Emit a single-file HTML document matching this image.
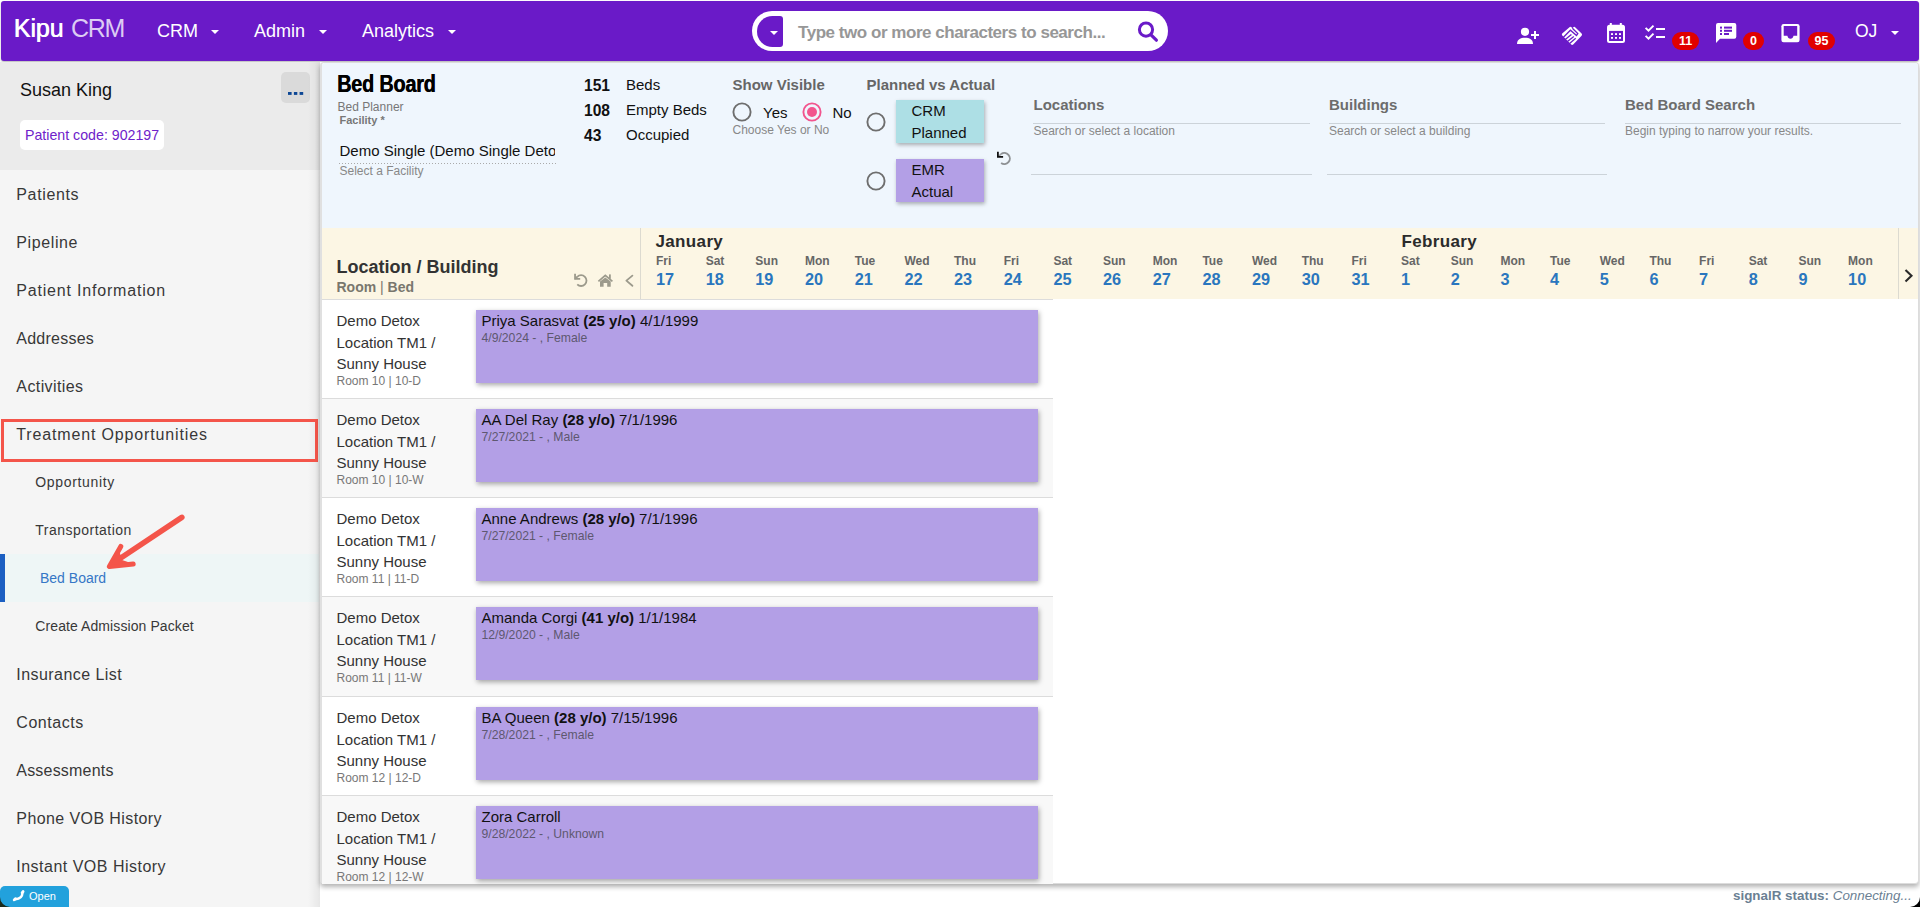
<!DOCTYPE html>
<html><head><meta charset="utf-8"><title>Bed Board</title>
<style>
html,body{margin:0;padding:0;width:1920px;height:907px;overflow:hidden;background:#fff;font-family:"Liberation Sans",sans-serif;}
.t{position:absolute;white-space:nowrap;}
.r{position:absolute;}
svg.r{display:block;overflow:visible}
</style></head><body>
<div class="r" style="left:1px;top:1px;width:1918px;height:60px;background:#6a1ac8;border-radius:3px;box-shadow:0 1px 2px rgba(0,0,0,.3)"></div>
<div class="t " style="left:13.6px;top:15.84px;font-size:25px;line-height:25px;color:#fff;font-weight:normal;letter-spacing:-0.1px;text-shadow:0.6px 0 0 #fff">Kipu</div>
<div class="t " style="left:71px;top:15.84px;font-size:25px;line-height:25px;color:#dccbf3;font-weight:normal;letter-spacing:-1.3px">CRM</div>
<div class="t " style="left:157px;top:21.76px;font-size:18px;line-height:18px;color:#fff">CRM</div>
<svg class="r" style="left:211px;top:30px" width="8" height="4"><path d="M0 0H8L4.0 4Z" fill="#fff"/></svg>
<div class="t " style="left:254px;top:21.76px;font-size:18px;line-height:18px;color:#fff">Admin</div>
<svg class="r" style="left:319px;top:30px" width="8" height="4"><path d="M0 0H8L4.0 4Z" fill="#fff"/></svg>
<div class="t " style="left:362px;top:21.76px;font-size:18px;line-height:18px;color:#fff">Analytics</div>
<svg class="r" style="left:448px;top:30px" width="8" height="4"><path d="M0 0H8L4.0 4Z" fill="#fff"/></svg>
<div class="r" style="left:752px;top:11px;width:416px;height:40px;background:#fff;border-radius:20px"></div>
<div class="r" style="left:757px;top:16px;width:26px;height:31px;background:#6a1ac8;border-radius:15.5px 3px 3px 15.5px"></div>
<svg class="r" style="left:770px;top:31px" width="8" height="4"><path d="M0 0H8L4.0 4Z" fill="#fff"/></svg>
<div class="t " style="left:798px;top:23.61px;font-size:17px;line-height:17px;color:#979797;font-weight:bold;letter-spacing:-0.46px">Type two or more characters to search...</div>
<svg class="r" style="left:1134px;top:18px" width="28" height="28"><circle cx="12" cy="11.6" r="6.6" fill="none" stroke="#6a1ac8" stroke-width="3"/><path d="M17 16.8L22.4 22.2" stroke="#6a1ac8" stroke-width="3.2" stroke-linecap="round"/></svg>
<svg class="r" style="left:1515px;top:26px" width="26" height="20"><circle cx="10" cy="5.8" r="4.1" fill="#fff"/><path d="M2 18 C2 13.5 5.5 11.8 10 11.8 C14.5 11.8 18 13.5 18 18 Z" fill="#fff"/><rect x="19" y="5" width="2" height="8" fill="#fff"/><rect x="16" y="8" width="8" height="2" fill="#fff"/></svg>
<svg class="r" style="left:1558px;top:24px" width="28" height="24"><path d="M4.2 9.6 Q3.4 10.5 4.3 11.4 L13.2 20.6 Q14.2 21.5 15.2 20.6 L23.6 11.7 Q24.5 10.6 23.6 9.6 L17.4 3.4 Q16.2 2.3 15.1 3.5 L14.4 4.3 L13.7 3.5 Q12.4 2.3 11.2 3.4 Z" fill="#fff"/>
<g fill="none" stroke="#6a1ac8" stroke-width="1.3"><path d="M5.2 13.5 L12.4 6.2 L18.5 11.6 L19.8 9.6 L14.4 4.3"/><path d="M6.6 15.9 L13.4 10.5"/><path d="M8.8 18 L15.8 12.4"/><path d="M11 20.1 L17.7 14.3"/></g></svg>
<svg class="r" style="left:1606px;top:22px" width="21" height="22"><rect x="1" y="2.7" width="18" height="18.3" rx="2.5" fill="#fff"/><rect x="3.8" y="1" width="2" height="3" fill="#fff"/><rect x="13.8" y="1" width="2" height="3" fill="#fff"/>
<rect x="3.1" y="8.9" width="13.9" height="10.1" fill="#6a1ac8"/>
<g fill="#fff"><rect x="5" y="11.2" width="2" height="1.8"/><rect x="9" y="11.2" width="2" height="1.8"/><rect x="13" y="11.2" width="2" height="1.8"/><rect x="5" y="15" width="2" height="1.8"/><rect x="9" y="15" width="2" height="1.8"/><rect x="13" y="15" width="2" height="1.8"/></g></svg>
<svg class="r" style="left:1644px;top:24px" width="22" height="17"><g fill="none" stroke="#fff" stroke-width="1.9"><path d="M1.6 3.8 L4.5 6.7 L9.5 1.6"/><path d="M1.6 11.8 L4.5 14.7 L9.5 9.6"/></g><rect x="12" y="4" width="9" height="2" fill="#fff"/><rect x="12" y="12" width="9" height="2" fill="#fff"/></svg>
<div class="r" style="left:1672px;top:32px;width:27px;height:18px;background:#e00000;border-radius:9px"></div><div class="t " style="left:1672px;top:35.42px;font-size:12.5px;line-height:12.5px;color:#fff;font-weight:bold;width:27px;text-align:center">11</div>
<svg class="r" style="left:1715px;top:22px" width="23" height="23"><path d="M3 1 H19.3 A2 2 0 0 1 21.3 3 V14.8 A2 2 0 0 1 19.3 16.8 H5 L1 21 V3 A2 2 0 0 1 3 1 Z" fill="#fff"/>
<g fill="#6a1ac8"><rect x="5" y="4.6" width="2" height="2"/><rect x="5" y="7.8" width="2" height="2"/><rect x="5" y="11" width="2" height="2"/><rect x="9" y="4.6" width="8" height="2"/><rect x="9" y="7.8" width="8" height="2"/><rect x="9" y="11" width="5" height="2"/></g></svg>
<div class="r" style="left:1743px;top:32px;width:21px;height:18px;background:#e00000;border-radius:9px"></div><div class="t " style="left:1743px;top:35.42px;font-size:12.5px;line-height:12.5px;color:#fff;font-weight:bold;width:21px;text-align:center">0</div>
<svg class="r" style="left:1780px;top:23px" width="21" height="20"><rect x="1.4" y="1" width="18.2" height="18.2" rx="2.2" fill="#fff"/><path d="M3.7 3 H17.2 V12.7 H13.5 C13.2 14.4 12 15.8 10.45 15.8 C8.9 15.8 7.7 14.4 7.4 12.7 H3.7 Z" fill="#6a1ac8"/></svg>
<div class="r" style="left:1808px;top:32px;width:27px;height:18px;background:#e00000;border-radius:9px"></div><div class="t " style="left:1808px;top:35.42px;font-size:12.5px;line-height:12.5px;color:#fff;font-weight:bold;width:27px;text-align:center">95</div>
<div class="t " style="left:1855px;top:23.49px;font-size:17.5px;line-height:17.5px;color:#fff">OJ</div>
<svg class="r" style="left:1891px;top:31px" width="8" height="4"><path d="M0 0H8L4.0 4Z" fill="#fff"/></svg>
<div class="r" style="left:0px;top:62px;width:320px;height:108px;background:#ebebeb"></div>
<div class="r" style="left:0px;top:170px;width:320px;height:737px;background:#f5f5f5"></div>
<div class="t " style="left:20px;top:80.76px;font-size:18px;line-height:18px;color:#111">Susan King</div>
<div class="r" style="left:281px;top:72px;width:29px;height:31px;background:#dadada;border-radius:5px"></div>
<svg class="r" style="left:287px;top:91px" width="18" height="5"><rect x="1" y="1" width="3.6" height="2.9" fill="#0d4795"/><rect x="6.9" y="1" width="3.4" height="2.9" fill="#0d4795"/><rect x="12.6" y="1" width="3.6" height="2.9" fill="#0d4795"/></svg>
<div class="r" style="left:20px;top:120px;width:144px;height:30px;background:#fff;border-radius:5px"></div>
<div class="t " style="left:25px;top:127.98px;font-size:14.2px;line-height:14.2px;color:#6e22ca">Patient code: 902197</div>
<div class="t " style="left:16.3px;top:186.86px;font-size:16px;line-height:16px;color:#383838;letter-spacing:0.64px">Patients</div>
<div class="t " style="left:16.3px;top:234.86px;font-size:16px;line-height:16px;color:#383838;letter-spacing:0.61px">Pipeline</div>
<div class="t " style="left:16.3px;top:282.86px;font-size:16px;line-height:16px;color:#383838;letter-spacing:0.81px">Patient Information</div>
<div class="t " style="left:16.3px;top:330.86px;font-size:16px;line-height:16px;color:#383838;letter-spacing:0.24px">Addresses</div>
<div class="t " style="left:16.3px;top:378.86px;font-size:16px;line-height:16px;color:#383838;letter-spacing:0.41px">Activities</div>
<div class="t " style="left:16.3px;top:426.86px;font-size:16px;line-height:16px;color:#383838;letter-spacing:0.85px">Treatment Opportunities</div>
<div class="t " style="left:35.3px;top:475.15px;font-size:14px;line-height:14px;color:#383838;letter-spacing:0.67px">Opportunity</div>
<div class="t " style="left:35.3px;top:523.15px;font-size:14px;line-height:14px;color:#383838;letter-spacing:0.48px">Transportation</div>
<div class="r" style="left:0px;top:554px;width:319px;height:48px;background:#eef6f6"></div>
<div class="r" style="left:0px;top:554px;width:5px;height:48px;background:#1c5fc2"></div>
<div class="t " style="left:40px;top:571.15px;font-size:14px;line-height:14px;color:#3577c6;letter-spacing:0px">Bed Board</div>
<div class="t " style="left:35.3px;top:619.15px;font-size:14px;line-height:14px;color:#383838;letter-spacing:0.09px">Create Admission Packet</div>
<div class="t " style="left:16.3px;top:666.86px;font-size:16px;line-height:16px;color:#383838;letter-spacing:0.44px">Insurance List</div>
<div class="t " style="left:16.3px;top:714.86px;font-size:16px;line-height:16px;color:#383838;letter-spacing:0.56px">Contacts</div>
<div class="t " style="left:16.3px;top:762.86px;font-size:16px;line-height:16px;color:#383838;letter-spacing:0.2px">Assessments</div>
<div class="t " style="left:16.3px;top:810.86px;font-size:16px;line-height:16px;color:#383838;letter-spacing:0.41px">Phone VOB History</div>
<div class="t " style="left:16.3px;top:858.86px;font-size:16px;line-height:16px;color:#383838;letter-spacing:0.49px">Instant VOB History</div>
<div class="r" style="left:308px;top:62px;width:12px;height:845px;background:linear-gradient(to right, rgba(0,0,0,0), rgba(0,0,0,.06))"></div>
<div class="r" style="left:1px;top:419px;width:317px;height:43px;border:3px solid #f4554a;box-sizing:border-box"></div>
<svg class="r" style="left:100px;top:510px" width="92" height="66"><path d="M81.8 7.4 L14 52.5" fill="none" stroke="#f4554a" stroke-width="5.6" stroke-linecap="round"/><path d="M20.8 36.4 L9.4 56.6 L33.2 54" fill="none" stroke="#f4554a" stroke-width="5" stroke-linecap="round" stroke-linejoin="round"/><path d="M11 55 L19 40 L22 50 L31 53 Z" fill="#f4554a"/></svg>
<div class="r" style="left:0px;top:886px;width:69px;height:30px;background:#22a1dc;border-radius:5px"></div>
<svg class="r" style="left:10px;top:887px" width="18" height="18"><path d="M12.4 6.2 Q12.2 11.6 5.4 12.2" fill="none" stroke="#fff" stroke-width="2.5"/><ellipse cx="12.6" cy="5.2" rx="2.3" ry="1.5" transform="rotate(-50 12.6 5.2)" fill="#fff"/><ellipse cx="4.8" cy="12.3" rx="2.3" ry="1.5" transform="rotate(-40 4.8 12.3)" fill="#fff"/></svg>
<div class="t " style="left:29px;top:890.69px;font-size:11px;line-height:11px;color:#fff">Open</div>
<div class="r" style="left:320px;top:62px;width:1600px;height:845px;background:#fff"></div>
<div class="r" style="left:320px;top:62px;width:1599px;height:822px;background:#fff;border:1px solid #dcdcdc;border-left:2px solid #e0e0e0;box-sizing:border-box;border-radius:4px;box-shadow:0 3px 5px rgba(0,0,0,.3)"></div>
<div class="r" style="left:322px;top:63px;width:1596px;height:165px;background:#eff6fd;border-radius:3px 3px 0 0"></div>
<div class="t " style="left:336.8px;top:72.53px;font-size:23px;line-height:23px;color:#000;font-weight:bold;transform:scaleX(0.86);transform-origin:0 0;letter-spacing:-0.2px;text-shadow:0.5px 0 0 #000">Bed Board</div>
<div class="t " style="left:337.5px;top:100.54px;font-size:12px;line-height:12px;color:#777">Bed Planner</div>
<div class="t " style="left:339.5px;top:114.69px;font-size:11px;line-height:11px;color:#777;font-weight:bold">Facility *</div>
<div class="t " style="left:339.5px;top:142.50px;font-size:15px;line-height:15px;color:#111;width:215px;height:20px;overflow:hidden">Demo Single (Demo Single Deto</div>
<div class="r" style="left:339px;top:163px;width:217px;height:1px;background:repeating-linear-gradient(to right,#aaa 0 1px,transparent 1px 3px)"></div>
<div class="t " style="left:339.5px;top:164.84px;font-size:12px;line-height:12px;color:#888">Select a Facility</div>
<div class="t " style="left:584px;top:77.99px;font-size:15.6px;line-height:15.6px;color:#111;font-weight:bold">151</div>
<div class="t " style="left:626px;top:77.30px;font-size:15px;line-height:15px;color:#111">Beds</div>
<div class="t " style="left:584px;top:102.99px;font-size:15.6px;line-height:15.6px;color:#111;font-weight:bold">108</div>
<div class="t " style="left:626px;top:102.30px;font-size:15px;line-height:15px;color:#111">Empty Beds</div>
<div class="t " style="left:584px;top:127.99px;font-size:15.6px;line-height:15.6px;color:#111;font-weight:bold">43</div>
<div class="t " style="left:626px;top:127.30px;font-size:15px;line-height:15px;color:#111">Occupied</div>
<div class="t " style="left:732.5px;top:77.20px;font-size:15px;line-height:15px;color:#666;font-weight:bold">Show Visible</div>
<svg class="r" style="left:732px;top:102px" width="20" height="20"><circle cx="10" cy="10" r="8.6" fill="none" stroke="#6e6e6e" stroke-width="1.9"/></svg>
<div class="t " style="left:763px;top:105.00px;font-size:15px;line-height:15px;color:#111">Yes</div>
<svg class="r" style="left:802px;top:102px" width="20" height="20"><circle cx="10" cy="10" r="8.6" fill="none" stroke="#f2558e" stroke-width="1.9"/><circle cx="10" cy="10" r="5" fill="#f2558e"/></svg>
<div class="t " style="left:832.5px;top:105.00px;font-size:15px;line-height:15px;color:#111">No</div>
<div class="t " style="left:732.5px;top:123.84px;font-size:12px;line-height:12px;color:#888">Choose Yes or No</div>
<div class="t " style="left:866.5px;top:77.20px;font-size:15px;line-height:15px;color:#666;font-weight:bold">Planned vs Actual</div>
<svg class="r" style="left:866px;top:112px" width="20" height="20"><circle cx="10" cy="10" r="8.6" fill="none" stroke="#6e6e6e" stroke-width="1.9"/></svg>
<svg class="r" style="left:866px;top:171px" width="20" height="20"><circle cx="10" cy="10" r="8.6" fill="none" stroke="#6e6e6e" stroke-width="1.9"/></svg>
<div class="r" style="left:896px;top:100px;width:88px;height:43px;background:#addfe5;box-shadow:1px 2px 4px rgba(0,0,0,.3)"></div>
<div class="t " style="left:911.5px;top:103.00px;font-size:15px;line-height:15px;color:#111">CRM</div>
<div class="t " style="left:911.5px;top:124.80px;font-size:15px;line-height:15px;color:#111">Planned</div>
<div class="r" style="left:896px;top:159px;width:88px;height:43px;background:#b39fe6;box-shadow:1px 2px 4px rgba(0,0,0,.3)"></div>
<div class="t " style="left:911.5px;top:162.00px;font-size:15px;line-height:15px;color:#111">EMR</div>
<div class="t " style="left:911.5px;top:183.80px;font-size:15px;line-height:15px;color:#111">Actual</div>
<svg class="r" style="left:990px;top:145px" width="30" height="25"><path d="M11.12 8.95 A5.55 5.55 0 1 1 11.12 18.05" fill="none" stroke="#8e9194" stroke-width="1.9"/><path d="M8.6 11.2 L11.3 8.9" fill="none" stroke="#9ea1a4" stroke-width="1.5"/><path d="M7.9 6.7 V11.95 H13.1" fill="none" stroke="#111" stroke-width="1.8"/></svg>
<div class="t " style="left:1033.5px;top:97.30px;font-size:15px;line-height:15px;color:#6c6c6c;font-weight:bold">Locations</div>
<div class="r" style="left:1033px;top:123px;width:277px;height:1px;background:#ccd3d9"></div>
<div class="t " style="left:1033.5px;top:124.84px;font-size:12px;line-height:12px;color:#888">Search or select a location</div>
<div class="r" style="left:1031px;top:174px;width:281px;height:1px;background:#ccd3d9"></div>
<div class="t " style="left:1329.0px;top:97.30px;font-size:15px;line-height:15px;color:#6c6c6c;font-weight:bold">Buildings</div>
<div class="r" style="left:1328.5px;top:123px;width:276.5px;height:1px;background:#ccd3d9"></div>
<div class="t " style="left:1329.0px;top:124.84px;font-size:12px;line-height:12px;color:#888">Search or select a building</div>
<div class="r" style="left:1326.5px;top:174px;width:280.5px;height:1px;background:#ccd3d9"></div>
<div class="t " style="left:1625.0px;top:97.30px;font-size:15px;line-height:15px;color:#6c6c6c;font-weight:bold">Bed Board Search</div>
<div class="r" style="left:1624.5px;top:123px;width:276.5px;height:1px;background:#ccd3d9"></div>
<div class="t " style="left:1625.0px;top:124.84px;font-size:12px;line-height:12px;color:#888">Begin typing to narrow your results.</div>
<div class="r" style="left:322px;top:228px;width:1596px;height:71px;background:#fcf6e4"></div>
<div class="r" style="left:322px;top:299px;width:731px;height:1px;background:#dcdcdc"></div>
<div class="r" style="left:640px;top:228px;width:1px;height:71px;background:#dcdad0"></div>
<div class="r" style="left:1898px;top:228px;width:1px;height:71px;background:#dcdad0"></div>
<div class="t " style="left:336.5px;top:257.76px;font-size:18px;line-height:18px;color:#333;font-weight:bold">Location / Building</div>
<div class="t " style="left:336.5px;top:280.15px;font-size:14px;line-height:14px;color:#79776d;font-weight:bold">Room <span style="font-weight:normal">|</span> Bed</div>
<svg class="r" style="left:568px;top:266px" width="72" height="28"><g fill="none" stroke="#9c9a8c" stroke-width="1.8">
<path d="M7.05 7.7 V12.85 H12.2"/><path d="M7.05 12.85 L9.4 10.6"/><path d="M9.28 10.78 A5.4 5.4 0 1 1 9.28 18.42"/>
<path d="M30.4 15.4 L37.3 9.4 L44.4 15.4"/>
<path d="M58.4 14.6 L64.4 9.6 M58.4 14.6 L64.4 19.8" stroke-linecap="round"/>
</g><g fill="#9c9a8c"><rect x="41" y="8.4" width="1.8" height="4.4"/><path d="M32 15.6 L37.3 11.4 L42.7 15.6 V20.8 H39.2 V17 H35.6 V20.8 H32 Z"/></g></svg>
<svg class="r" style="left:1903px;top:268px" width="12" height="16"><path d="M2.5 2 L8.5 7.8 L2.5 13.6" fill="none" stroke="#2a2a2a" stroke-width="2.1"/></svg>
<div class="t " style="left:656.0px;top:254.84px;font-size:12px;line-height:12px;color:#666;font-weight:bold">Fri</div>
<div class="t " style="left:656.0px;top:271.20px;font-size:16.3px;line-height:16.3px;color:#2a76be;font-weight:bold">17</div>
<div class="t " style="left:705.7px;top:254.84px;font-size:12px;line-height:12px;color:#666;font-weight:bold">Sat</div>
<div class="t " style="left:705.7px;top:271.20px;font-size:16.3px;line-height:16.3px;color:#2a76be;font-weight:bold">18</div>
<div class="t " style="left:755.3px;top:254.84px;font-size:12px;line-height:12px;color:#666;font-weight:bold">Sun</div>
<div class="t " style="left:755.3px;top:271.20px;font-size:16.3px;line-height:16.3px;color:#2a76be;font-weight:bold">19</div>
<div class="t " style="left:805.0px;top:254.84px;font-size:12px;line-height:12px;color:#666;font-weight:bold">Mon</div>
<div class="t " style="left:805.0px;top:271.20px;font-size:16.3px;line-height:16.3px;color:#2a76be;font-weight:bold">20</div>
<div class="t " style="left:854.7px;top:254.84px;font-size:12px;line-height:12px;color:#666;font-weight:bold">Tue</div>
<div class="t " style="left:854.7px;top:271.20px;font-size:16.3px;line-height:16.3px;color:#2a76be;font-weight:bold">21</div>
<div class="t " style="left:904.4px;top:254.84px;font-size:12px;line-height:12px;color:#666;font-weight:bold">Wed</div>
<div class="t " style="left:904.4px;top:271.20px;font-size:16.3px;line-height:16.3px;color:#2a76be;font-weight:bold">22</div>
<div class="t " style="left:954.0px;top:254.84px;font-size:12px;line-height:12px;color:#666;font-weight:bold">Thu</div>
<div class="t " style="left:954.0px;top:271.20px;font-size:16.3px;line-height:16.3px;color:#2a76be;font-weight:bold">23</div>
<div class="t " style="left:1003.7px;top:254.84px;font-size:12px;line-height:12px;color:#666;font-weight:bold">Fri</div>
<div class="t " style="left:1003.7px;top:271.20px;font-size:16.3px;line-height:16.3px;color:#2a76be;font-weight:bold">24</div>
<div class="t " style="left:1053.4px;top:254.84px;font-size:12px;line-height:12px;color:#666;font-weight:bold">Sat</div>
<div class="t " style="left:1053.4px;top:271.20px;font-size:16.3px;line-height:16.3px;color:#2a76be;font-weight:bold">25</div>
<div class="t " style="left:1103.0px;top:254.84px;font-size:12px;line-height:12px;color:#666;font-weight:bold">Sun</div>
<div class="t " style="left:1103.0px;top:271.20px;font-size:16.3px;line-height:16.3px;color:#2a76be;font-weight:bold">26</div>
<div class="t " style="left:1152.7px;top:254.84px;font-size:12px;line-height:12px;color:#666;font-weight:bold">Mon</div>
<div class="t " style="left:1152.7px;top:271.20px;font-size:16.3px;line-height:16.3px;color:#2a76be;font-weight:bold">27</div>
<div class="t " style="left:1202.4px;top:254.84px;font-size:12px;line-height:12px;color:#666;font-weight:bold">Tue</div>
<div class="t " style="left:1202.4px;top:271.20px;font-size:16.3px;line-height:16.3px;color:#2a76be;font-weight:bold">28</div>
<div class="t " style="left:1252.0px;top:254.84px;font-size:12px;line-height:12px;color:#666;font-weight:bold">Wed</div>
<div class="t " style="left:1252.0px;top:271.20px;font-size:16.3px;line-height:16.3px;color:#2a76be;font-weight:bold">29</div>
<div class="t " style="left:1301.7px;top:254.84px;font-size:12px;line-height:12px;color:#666;font-weight:bold">Thu</div>
<div class="t " style="left:1301.7px;top:271.20px;font-size:16.3px;line-height:16.3px;color:#2a76be;font-weight:bold">30</div>
<div class="t " style="left:1351.4px;top:254.84px;font-size:12px;line-height:12px;color:#666;font-weight:bold">Fri</div>
<div class="t " style="left:1351.4px;top:271.20px;font-size:16.3px;line-height:16.3px;color:#2a76be;font-weight:bold">31</div>
<div class="t " style="left:1401.1px;top:254.84px;font-size:12px;line-height:12px;color:#666;font-weight:bold">Sat</div>
<div class="t " style="left:1401.1px;top:271.20px;font-size:16.3px;line-height:16.3px;color:#2a76be;font-weight:bold">1</div>
<div class="t " style="left:1450.7px;top:254.84px;font-size:12px;line-height:12px;color:#666;font-weight:bold">Sun</div>
<div class="t " style="left:1450.7px;top:271.20px;font-size:16.3px;line-height:16.3px;color:#2a76be;font-weight:bold">2</div>
<div class="t " style="left:1500.4px;top:254.84px;font-size:12px;line-height:12px;color:#666;font-weight:bold">Mon</div>
<div class="t " style="left:1500.4px;top:271.20px;font-size:16.3px;line-height:16.3px;color:#2a76be;font-weight:bold">3</div>
<div class="t " style="left:1550.1px;top:254.84px;font-size:12px;line-height:12px;color:#666;font-weight:bold">Tue</div>
<div class="t " style="left:1550.1px;top:271.20px;font-size:16.3px;line-height:16.3px;color:#2a76be;font-weight:bold">4</div>
<div class="t " style="left:1599.7px;top:254.84px;font-size:12px;line-height:12px;color:#666;font-weight:bold">Wed</div>
<div class="t " style="left:1599.7px;top:271.20px;font-size:16.3px;line-height:16.3px;color:#2a76be;font-weight:bold">5</div>
<div class="t " style="left:1649.4px;top:254.84px;font-size:12px;line-height:12px;color:#666;font-weight:bold">Thu</div>
<div class="t " style="left:1649.4px;top:271.20px;font-size:16.3px;line-height:16.3px;color:#2a76be;font-weight:bold">6</div>
<div class="t " style="left:1699.1px;top:254.84px;font-size:12px;line-height:12px;color:#666;font-weight:bold">Fri</div>
<div class="t " style="left:1699.1px;top:271.20px;font-size:16.3px;line-height:16.3px;color:#2a76be;font-weight:bold">7</div>
<div class="t " style="left:1748.7px;top:254.84px;font-size:12px;line-height:12px;color:#666;font-weight:bold">Sat</div>
<div class="t " style="left:1748.7px;top:271.20px;font-size:16.3px;line-height:16.3px;color:#2a76be;font-weight:bold">8</div>
<div class="t " style="left:1798.4px;top:254.84px;font-size:12px;line-height:12px;color:#666;font-weight:bold">Sun</div>
<div class="t " style="left:1798.4px;top:271.20px;font-size:16.3px;line-height:16.3px;color:#2a76be;font-weight:bold">9</div>
<div class="t " style="left:1848.1px;top:254.84px;font-size:12px;line-height:12px;color:#666;font-weight:bold">Mon</div>
<div class="t " style="left:1848.1px;top:271.20px;font-size:16.3px;line-height:16.3px;color:#2a76be;font-weight:bold">10</div>
<div class="t " style="left:655.5px;top:232.61px;font-size:17px;line-height:17px;color:#2b2b2b;font-weight:bold;letter-spacing:0.35px">January</div>
<div class="t " style="left:1401.5px;top:232.61px;font-size:17px;line-height:17px;color:#2b2b2b;font-weight:bold;letter-spacing:0.35px">February</div>
<div class="r" style="left:322px;top:300px;width:731px;height:98px;background:#fff"></div>
<div class="r" style="left:322px;top:398px;width:731px;height:1px;background:#dcdcdc"></div>
<div class="t " style="left:336.5px;top:313.30px;font-size:15px;line-height:15px;color:#333">Demo Detox</div>
<div class="t " style="left:336.5px;top:334.70px;font-size:15px;line-height:15px;color:#333">Location TM1 /</div>
<div class="t " style="left:336.5px;top:356.20px;font-size:15px;line-height:15px;color:#333">Sunny House</div>
<div class="t " style="left:336.5px;top:374.84px;font-size:12px;line-height:12px;color:#777">Room 10 | 10-D</div>
<div class="r" style="left:476px;top:310px;width:562px;height:73px;background:#b39fe6;box-shadow:1px 2px 5px rgba(0,0,0,.35)"></div>
<div class="t " style="left:481.5px;top:313.30px;font-size:15px;line-height:15px;color:#111">Priya Sarasvat <b>(25 y/o)</b> 4/1/1999</div>
<div class="t " style="left:481.5px;top:331.87px;font-size:12.2px;line-height:12.2px;color:#5e5870">4/9/2024 - , Female</div>
<div class="r" style="left:322px;top:399px;width:731px;height:98px;background:#f8f8f8"></div>
<div class="r" style="left:322px;top:497px;width:731px;height:1px;background:#dcdcdc"></div>
<div class="t " style="left:336.5px;top:412.30px;font-size:15px;line-height:15px;color:#333">Demo Detox</div>
<div class="t " style="left:336.5px;top:433.70px;font-size:15px;line-height:15px;color:#333">Location TM1 /</div>
<div class="t " style="left:336.5px;top:455.20px;font-size:15px;line-height:15px;color:#333">Sunny House</div>
<div class="t " style="left:336.5px;top:473.84px;font-size:12px;line-height:12px;color:#777">Room 10 | 10-W</div>
<div class="r" style="left:476px;top:409px;width:562px;height:73px;background:#b39fe6;box-shadow:1px 2px 5px rgba(0,0,0,.35)"></div>
<div class="t " style="left:481.5px;top:412.30px;font-size:15px;line-height:15px;color:#111">AA Del Ray <b>(28 y/o)</b> 7/1/1996</div>
<div class="t " style="left:481.5px;top:430.87px;font-size:12.2px;line-height:12.2px;color:#5e5870">7/27/2021 - , Male</div>
<div class="r" style="left:322px;top:498px;width:731px;height:98px;background:#fff"></div>
<div class="r" style="left:322px;top:596px;width:731px;height:1px;background:#dcdcdc"></div>
<div class="t " style="left:336.5px;top:511.30px;font-size:15px;line-height:15px;color:#333">Demo Detox</div>
<div class="t " style="left:336.5px;top:532.70px;font-size:15px;line-height:15px;color:#333">Location TM1 /</div>
<div class="t " style="left:336.5px;top:554.20px;font-size:15px;line-height:15px;color:#333">Sunny House</div>
<div class="t " style="left:336.5px;top:572.84px;font-size:12px;line-height:12px;color:#777">Room 11 | 11-D</div>
<div class="r" style="left:476px;top:508px;width:562px;height:73px;background:#b39fe6;box-shadow:1px 2px 5px rgba(0,0,0,.35)"></div>
<div class="t " style="left:481.5px;top:511.30px;font-size:15px;line-height:15px;color:#111">Anne Andrews <b>(28 y/o)</b> 7/1/1996</div>
<div class="t " style="left:481.5px;top:529.87px;font-size:12.2px;line-height:12.2px;color:#5e5870">7/27/2021 - , Female</div>
<div class="r" style="left:322px;top:597px;width:731px;height:99px;background:#f8f8f8"></div>
<div class="r" style="left:322px;top:696px;width:731px;height:1px;background:#dcdcdc"></div>
<div class="t " style="left:336.5px;top:610.30px;font-size:15px;line-height:15px;color:#333">Demo Detox</div>
<div class="t " style="left:336.5px;top:631.70px;font-size:15px;line-height:15px;color:#333">Location TM1 /</div>
<div class="t " style="left:336.5px;top:653.20px;font-size:15px;line-height:15px;color:#333">Sunny House</div>
<div class="t " style="left:336.5px;top:671.84px;font-size:12px;line-height:12px;color:#777">Room 11 | 11-W</div>
<div class="r" style="left:476px;top:607px;width:562px;height:73px;background:#b39fe6;box-shadow:1px 2px 5px rgba(0,0,0,.35)"></div>
<div class="t " style="left:481.5px;top:610.30px;font-size:15px;line-height:15px;color:#111">Amanda Corgi <b>(41 y/o)</b> 1/1/1984</div>
<div class="t " style="left:481.5px;top:628.87px;font-size:12.2px;line-height:12.2px;color:#5e5870">12/9/2020 - , Male</div>
<div class="r" style="left:322px;top:697px;width:731px;height:98px;background:#fff"></div>
<div class="r" style="left:322px;top:795px;width:731px;height:1px;background:#dcdcdc"></div>
<div class="t " style="left:336.5px;top:710.30px;font-size:15px;line-height:15px;color:#333">Demo Detox</div>
<div class="t " style="left:336.5px;top:731.70px;font-size:15px;line-height:15px;color:#333">Location TM1 /</div>
<div class="t " style="left:336.5px;top:753.20px;font-size:15px;line-height:15px;color:#333">Sunny House</div>
<div class="t " style="left:336.5px;top:771.84px;font-size:12px;line-height:12px;color:#777">Room 12 | 12-D</div>
<div class="r" style="left:476px;top:707px;width:562px;height:73px;background:#b39fe6;box-shadow:1px 2px 5px rgba(0,0,0,.35)"></div>
<div class="t " style="left:481.5px;top:710.30px;font-size:15px;line-height:15px;color:#111">BA Queen <b>(28 y/o)</b> 7/15/1996</div>
<div class="t " style="left:481.5px;top:728.87px;font-size:12.2px;line-height:12.2px;color:#5e5870">7/28/2021 - , Female</div>
<div class="r" style="left:322px;top:796px;width:731px;height:88px;background:#f8f8f8"></div>
<div class="t " style="left:336.5px;top:809.30px;font-size:15px;line-height:15px;color:#333">Demo Detox</div>
<div class="t " style="left:336.5px;top:830.70px;font-size:15px;line-height:15px;color:#333">Location TM1 /</div>
<div class="t " style="left:336.5px;top:852.20px;font-size:15px;line-height:15px;color:#333">Sunny House</div>
<div class="t " style="left:336.5px;top:870.84px;font-size:12px;line-height:12px;color:#777">Room 12 | 12-W</div>
<div class="r" style="left:476px;top:806px;width:562px;height:73px;background:#b39fe6;box-shadow:1px 2px 5px rgba(0,0,0,.35)"></div>
<div class="t " style="left:481.5px;top:809.30px;font-size:15px;line-height:15px;color:#111">Zora Carroll</div>
<div class="t " style="left:481.5px;top:827.87px;font-size:12.2px;line-height:12.2px;color:#5e5870">9/28/2022 - , Unknown</div>
<svg class="r" style="left:0px;top:897px" width="10" height="10"><path d="M0 0 A10 10 0 0 0 10 10 H0 Z" fill="#1b2a1b"/></svg>
<svg class="r" style="left:1910px;top:897px" width="10" height="10"><path d="M10 0 A10 10 0 0 1 0 10 H10 Z" fill="#000"/></svg>
<div class="t " style="left:1733px;top:889.36px;font-size:13.4px;line-height:13.4px;color:#6b7f93"><b>signalR status:</b> <i>Connecting...</i></div>
</body></html>
